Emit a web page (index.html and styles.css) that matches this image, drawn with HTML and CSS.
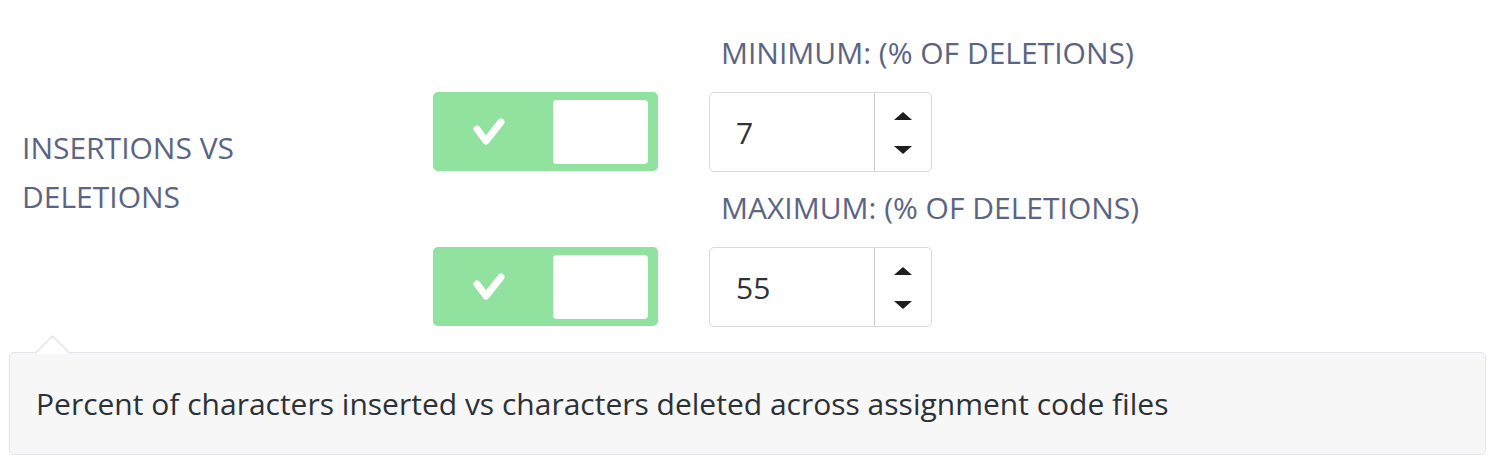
FILE: index.html
```html
<!DOCTYPE html>
<html>
<head>
<meta charset="utf-8">
<link rel="stylesheet" href="styles.css">
</head>
<body>
<div class="settings">
  <div class="name">INSERTIONS VS<br>DELETIONS</div>
  <div class="fields">
    <div class="field">
      <div class="field-label">MINIMUM: (% OF DELETIONS)</div>
      <div class="field-row">
        <div class="toggle">
          <div class="check"><svg width="34" height="30" viewBox="0 0 34 30"><path d="M5 12 L14 24 L29 5" fill="none" stroke="#fff" stroke-width="7" stroke-linecap="round" stroke-linejoin="round"/></svg></div>
          <div class="knob"></div>
        </div>
        <div class="number">
          <div class="value">7</div>
          <div class="spin">
            <svg width="18" height="8" viewBox="0 0 18 8"><path d="M9 0 L18 8 L0 8 Z" fill="#1e1e1e"/></svg>
            <svg width="18" height="8" viewBox="0 0 18 8"><path d="M0 0 L18 0 L9 8 Z" fill="#1e1e1e"/></svg>
          </div>
        </div>
      </div>
    </div>
    <div class="field">
      <div class="field-label">MAXIMUM: (% OF DELETIONS)</div>
      <div class="field-row">
        <div class="toggle">
          <div class="check"><svg width="34" height="30" viewBox="0 0 34 30"><path d="M5 12 L14 24 L29 5" fill="none" stroke="#fff" stroke-width="7" stroke-linecap="round" stroke-linejoin="round"/></svg></div>
          <div class="knob"></div>
        </div>
        <div class="number">
          <div class="value">55</div>
          <div class="spin">
            <svg width="18" height="8" viewBox="0 0 18 8"><path d="M9 0 L18 8 L0 8 Z" fill="#1e1e1e"/></svg>
            <svg width="18" height="8" viewBox="0 0 18 8"><path d="M0 0 L18 0 L9 8 Z" fill="#1e1e1e"/></svg>
          </div>
        </div>
      </div>
    </div>
  </div>
</div>
<div class="tooltip">
  <svg class="arrow" width="36" height="19" viewBox="0 0 36 19"><path d="M0 18.5 L17.5 1 L35 18.5" fill="#fff" stroke="#e3e5ea" stroke-width="1.5"/></svg>
  <div class="tip-text">Percent of characters inserted vs characters deleted across assignment code files</div>
</div>
</body>
</html>
```
FILE: styles.css
```css
html, body {
  margin: 0;
  padding: 0;
  background: #fff;
}
body {
  font-family: "Open Sans", "Liberation Sans", sans-serif;
  font-size: 30px;
  color: #2d3136;
}
.settings {
  display: flex;
  padding-top: 33px;
}
.name {
  width: 411px;
  padding-left: 22px;
  color: #5b6583;
  line-height: 49px;
  padding-top: 90px;
}
.fields {
  display: flex;
  flex-direction: column;
  gap: 16px;
}
.field-label {
  margin-left: 288px;
  color: #5b6583;
  line-height: 40px;
  margin-bottom: 19px;
}
.field-row {
  display: flex;
  gap: 51px;
}
.toggle {
  width: 225px;
  height: 79px;
  box-sizing: border-box;
  background: #91e19f;
  border-radius: 5px;
  padding: 8px 10px 7px 0;
  display: flex;
}
.check {
  flex: 1;
  display: flex;
  align-items: center;
  padding-left: 39px;
}
.check svg {
  display: block;
}
.knob {
  width: 95px;
  height: 64px;
  background: #fff;
  border-radius: 4px;
}
.number {
  width: 223px;
  height: 80px;
  box-sizing: border-box;
  border: 1.5px solid #d6d9e3;
  border-radius: 5px;
  display: flex;
}
.value {
  flex: 1;
  display: flex;
  align-items: center;
  padding-left: 26px;
  color: #2f3237;
}
.spin {
  width: 56px;
  border-left: 1.5px solid #c9c9c9;
  display: flex;
  flex-direction: column;
  align-items: center;
  justify-content: space-between;
  padding: 19px 0 17px;
}
.spin svg {
  display: block;
}
.tooltip {
  position: relative;
  margin: 25px 14px 0 9px;
  height: 103px;
  box-sizing: border-box;
  background: #f7f7f8;
  border: 1.5px solid #e3e5ea;
  border-radius: 5px;
  display: flex;
  align-items: center;
  padding-left: 26px;
}
.arrow {
  position: absolute;
  left: 25px;
  top: -18px;
}
.tip-text {
  line-height: 40px;
}
```
